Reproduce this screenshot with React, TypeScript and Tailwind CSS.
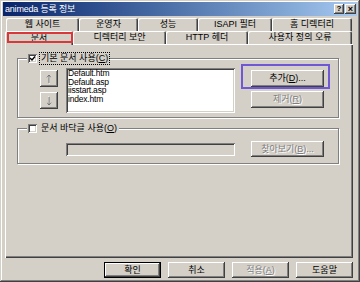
import type { ReactNode } from "react";

const raised =
  "shadow-[inset_-1px_-1px_#404040,inset_1px_1px_#ffffff,inset_-2px_-2px_#808080]";
const sunken =
  "shadow-[inset_1px_1px_#808080,inset_-1px_-1px_#ffffff,inset_2px_2px_#404040,inset_-2px_-2px_#d4d0c8]";
const etched = "border border-[#808080] shadow-[inset_1px_1px_#ffffff,1px_1px_#ffffff]";
const disabledText = "text-[#808080] [text-shadow:1px_1px_0_#ffffff]";

function Btn({
  children,
  className = "",
  disabled = false,
  isDefault = false,
}: {
  children: ReactNode;
  className?: string;
  disabled?: boolean;
  isDefault?: boolean;
}) {
  const frame = isDefault
    ? "shadow-[inset_0_0_0_1px_#000000,inset_-2px_-2px_#404040,inset_2px_2px_#ffffff,inset_-3px_-3px_#808080]"
    : raised;
  return (
    <div
      className={`flex items-center justify-center bg-[#d4d0c8] leading-none ${frame} ${
        disabled ? disabledText : "text-black"
      } ${className}`}
    >
      {children}
    </div>
  );
}

function CheckBox() {
  return (
    <div className={`w-[9px] h-[9px] bg-white flex items-center justify-center ${sunken}`}>
      <svg width="7" height="7" viewBox="0 0 7 7">
        <path d="M1 3 L3 5 L6 1.5" stroke="#000" strokeWidth="1.4" fill="none" />
      </svg>
    </div>
  );
}

function EmptyBox() {
  return <div className={`w-[9px] h-[9px] bg-white ${sunken}`} />;
}

function Arrow({ down = false }: { down?: boolean }) {
  return (
    <svg width="8" height="10" viewBox="0 0 8 10" className={down ? "rotate-180" : ""}>
      <path d="M4.5 1.5 V9.5 M2.5 4 L4.5 1.5 L6.5 4" stroke="#ffffff" strokeWidth="1" fill="none" />
      <path d="M4 1 V9 M2 3.5 L4 1 L6 3.5" stroke="#707070" strokeWidth="1" fill="none" />
    </svg>
  );
}

function Tab({ label, w }: { label: string; w: string }) {
  return (
    <div
      className={`${w} h-[13px] flex items-center justify-center rounded-t-[2px] leading-none shadow-[inset_1px_1px_#ffffff,inset_-1px_0_#404040,inset_-2px_0_#808080]`}
    >
      {label}
    </div>
  );
}

export default function App() {
  return (
    <div className="w-[360px] h-[282px] bg-[#d4d0c8] font-['Liberation_Sans','Noto_Sans_CJK_KR',sans-serif] text-[9px] text-black flex flex-col overflow-hidden shadow-[inset_-1px_-1px_#404040,inset_1px_1px_#d4d0c8,inset_-2px_-2px_#808080,inset_2px_2px_#ffffff]">
      {/* title bar */}
      <div className="mx-[3px] mt-[2px] h-[14px] flex items-center justify-between pl-[2px] pr-[1px] bg-linear-to-r from-[#0a246a] to-[#a6caf0]">
        <span className="text-white leading-none tracking-[-0.2px]">animeda 등록 정보</span>
        <div className="flex gap-[1px]">
          <Btn className="w-[10px] h-[10px] font-bold text-[8px]">?</Btn>
          <Btn className="w-[11px] h-[10px] font-bold text-[9px]">×</Btn>
        </div>
      </div>

      {/* tabs */}
      <div className="mt-[2px] ml-[6px] flex">
        <Tab label="웹 사이트" w="w-[73px]" />
        <Tab label="운영자" w="w-[59px]" />
        <Tab label="성능" w="w-[60px]" />
        <Tab label="ISAPI 필터" w="w-[74px]" />
        <Tab label="홈 디렉터리" w="w-[80px]" />
      </div>
      <div className="ml-[5px] flex relative z-10">
        <div className="relative w-[68px] h-[14px] -mb-[1px] bg-[#d4d0c8] flex items-center justify-center rounded-t-[2px] leading-none shadow-[inset_1px_1px_#ffffff,inset_-1px_0_#404040,inset_-2px_0_#808080]">
          문서
          <div className="absolute left-[2px] right-0 top-[1px] bottom-[2px] border-2 border-[#d8383a]" />
        </div>
        <Tab label="디렉터리 보안" w="w-[93px]" />
        <Tab label="HTTP 헤더" w="w-[82px]" />
        <Tab label="사용자 정의 오류" w="w-[104px]" />
      </div>

      {/* tab page */}
      <div className="ml-[5px] w-[348px] h-[214px] pt-[14px] pl-[12px] shadow-[inset_1px_1px_#ffffff,inset_-1px_-1px_#404040,inset_-2px_-2px_#808080]">
        {/* default documents group */}
        <div className={`w-[322px] h-[60px] ${etched}`}>
          <div className="-mt-[6px] ml-[9px] w-fit h-[11px] flex items-center gap-[3px] bg-[#d4d0c8] px-[1px]">
            <CheckBox />
            <span className="leading-none px-[1px] py-[1px] outline-1 outline-dotted outline-black">
              기본 문서 사용(<u>C</u>)
            </span>
          </div>
          <div className="flex mt-[4px] pl-[22px]">
            <div className="mt-[2px] flex flex-col gap-[5px]">
              <Btn className="w-[18px] h-[17px]">
                <Arrow />
              </Btn>
              <Btn className="w-[18px] h-[17px]">
                <Arrow down />
              </Btn>
            </div>
            <div className={`ml-[8px] w-[169px] h-[45px] bg-white pl-[2px] pt-[1px] text-[8.5px] leading-[8.5px] tracking-[-0.2px] ${sunken}`}>
              <div>Default.htm</div>
              <div>Default.asp</div>
              <div>iisstart.asp</div>
              <div>index.htm</div>
            </div>
            <div className="ml-[16px] mt-[2px] flex flex-col gap-[4px]">
              <div className="relative">
                <Btn className="w-[73px] h-[17px]">
                  추가(<u>D</u>)...
                </Btn>
                <div className="absolute -left-[10px] -right-[6px] -top-[6px] -bottom-[2px] border-2 border-[#6f58d6]" />
              </div>
              <Btn className="w-[73px] h-[17px]" disabled>
                제거(<u>R</u>)
              </Btn>
            </div>
          </div>
        </div>

        {/* footer group */}
        <div className={`mt-[10px] w-[322px] h-[36px] ${etched}`}>
          <div className="-mt-[6px] ml-[9px] w-fit h-[11px] flex items-center gap-[3px] bg-[#d4d0c8] px-[1px]">
            <EmptyBox />
            <span className="leading-none px-[1px]">
              문서 바닥글 사용(<u>O</u>)
            </span>
          </div>
          <div className="flex items-center mt-[7px] pl-[48px]">
            <div className={`w-[169px] h-[13px] bg-[#d4d0c8] ${sunken}`} />
            <Btn className="ml-[16px] w-[73px] h-[16px]" disabled>
              찾아보기(<u>B</u>)...
            </Btn>
          </div>
        </div>
      </div>

      {/* dialog buttons */}
      <div className="mt-[4px] pr-[7px] flex justify-end gap-[7px]">
        <Btn className="w-[57px] h-[16px]" isDefault>
          확인
        </Btn>
        <Btn className="w-[57px] h-[16px]">취소</Btn>
        <Btn className="w-[57px] h-[16px]" disabled>
          적용(<u>A</u>)
        </Btn>
        <Btn className="w-[57px] h-[16px]">도움말</Btn>
      </div>
    </div>
  );
}
